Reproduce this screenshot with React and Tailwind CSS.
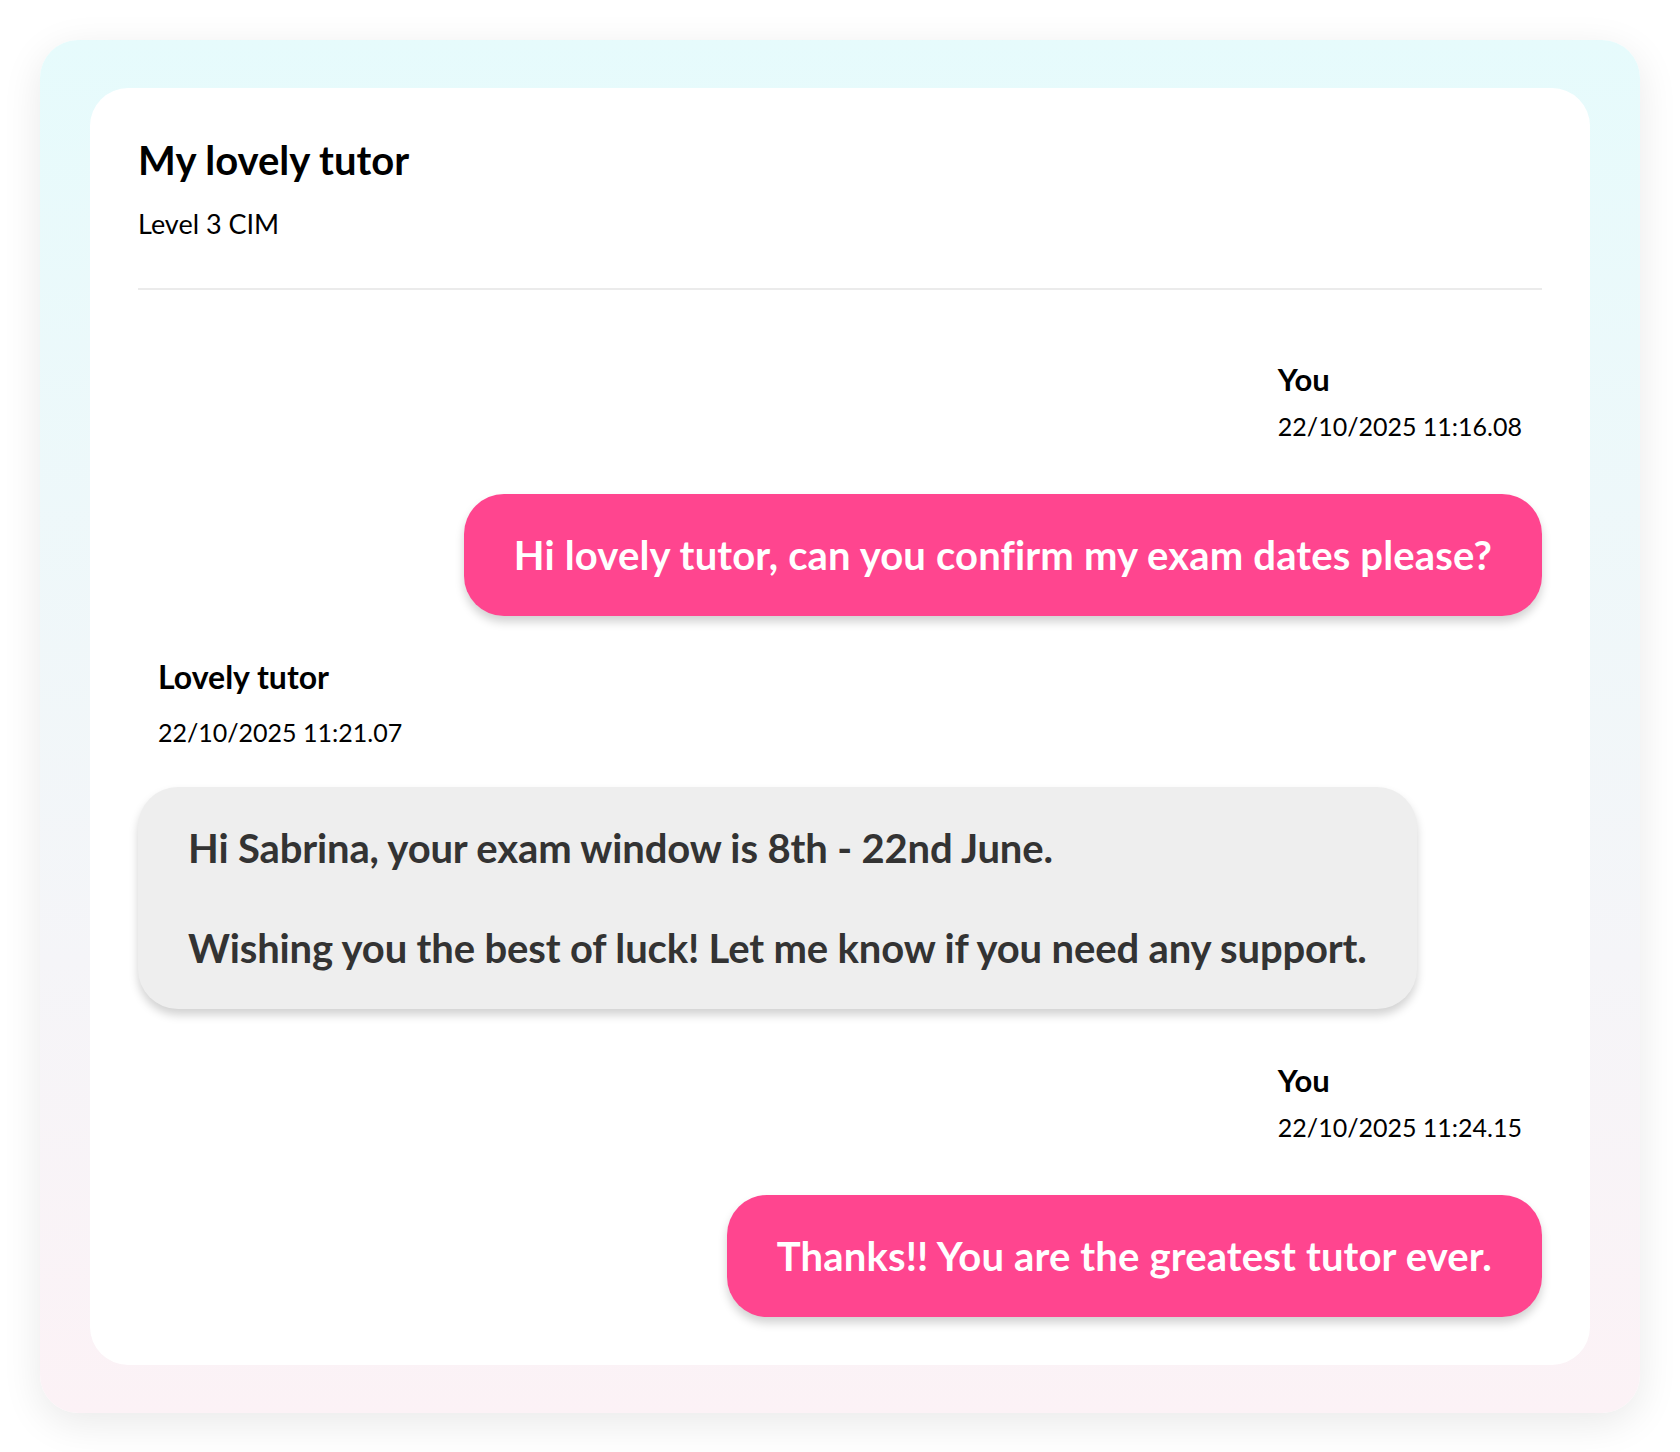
import React from 'react';

const font = { fontFamily: 'Lato, "Noto Sans", sans-serif' };

const messages = [
  {
    id: 1,
    mine: true,
    name: 'You',
    time: '22/10/2025 11:16.08',
    text: 'Hi lovely tutor, can you confirm my exam dates please?',
  },
  {
    id: 2,
    mine: false,
    name: 'Lovely tutor',
    time: '22/10/2025 11:21.07',
    text: 'Hi Sabrina, your exam window is 8th - 22nd June.\n\nWishing you the best of luck! Let me know if you need any support.',
  },
  {
    id: 3,
    mine: true,
    name: 'You',
    time: '22/10/2025 11:24.15',
    text: 'Thanks!! You are the greatest tutor ever.',
  },
];

const Message = ({ msg, first }) => {
  if (msg.mine) {
    return (
      <div className={`flex flex-col items-end ${first ? 'mt-[69px]' : 'mt-[51px]'}`}>
        <div className="pr-5 text-black">
          <div className="text-[31px] leading-[40px] font-bold">{msg.name}</div>
          <div className="mt-[9px] text-[25px] leading-[36px]">{msg.time}</div>
        </div>
        <div className="mt-[50px] bg-[#ff458f] text-white rounded-[40px] px-[50px] py-9 text-[40px] leading-[50px] font-bold tracking-[0.15px] shadow-[0_6px_10px_rgba(0,0,0,0.18)]">
          {msg.text}
        </div>
      </div>
    );
  }

  return (
    <div className="flex flex-col items-start mt-[41px]">
      <div className="pl-5 text-black">
        <div className="text-[32px] leading-[40px] font-bold">{msg.name}</div>
        <div className="mt-[17px] text-[25px] leading-[36px]">{msg.time}</div>
      </div>
      <div className="mt-[37px] bg-[#eeeeee] text-[#333333] rounded-[40px] px-[50px] py-9 text-[40px] leading-[50px] font-bold tracking-[-0.15px] whitespace-pre-line shadow-[0_6px_10px_rgba(0,0,0,0.18)]">
        {msg.text}
      </div>
    </div>
  );
};

export default function App() {
  return (
    <div className="min-h-screen bg-white p-10" style={font}>
      <div className="rounded-[38px] bg-gradient-to-b from-[#e6fbfc] to-[#fcf2f6] px-[50px] py-12 shadow-[0_10px_40px_rgba(0,0,0,0.09)]">
        <div className="bg-white rounded-[38px] p-12">
          <h1 className="text-[40px] leading-[48px] font-bold text-black">My lovely tutor</h1>
          <p className="mt-[22px] text-[27px] leading-[36px] text-black">Level 3 CIM</p>
          <div className="mt-[46px] border-t-2 border-[#ebebeb]" />

          {messages.map((msg, i) => (
            <Message key={msg.id} msg={msg} first={i === 0} />
          ))}
        </div>
      </div>
    </div>
  );
}
